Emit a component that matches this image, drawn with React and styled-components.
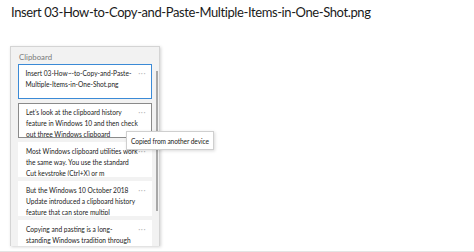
import React from 'react'
import styled, { createGlobalStyle } from 'styled-components'

const Global = createGlobalStyle`
  html, body {
    margin: 0;
    padding: 0;
    background: #fff;
    overflow: hidden;
  }
`

const Page = styled.div`
  width: 474px;
  height: 252px;
  position: relative;
  overflow: hidden;
  display: flex;
  flex-direction: column;
`

const Title = styled.div`
  font-family: Lato, "Open Sans", sans-serif;
  font-size: 13px;
  letter-spacing: -0.4px;
  line-height: 18px;
  color: #1a1a1a;
  padding: 3px 0 0 11px;
  height: 25px;
  box-sizing: border-box;
`

const Stage = styled.div`
  flex: 1;
  padding: 21px 0 0 10px;
  border-bottom: 1px solid #e4e4e4;
`

const Panel = styled.div`
  width: 150px;
  height: 200px;
  box-sizing: border-box;
  background: #f2f2f2;
  border: 1px solid #d4d4d4;
  border-bottom: none;
  box-shadow: 1px 1px 3px rgba(0, 0, 0, 0.18);
  overflow: hidden;
  font-family: Lato, "Open Sans", sans-serif;
`

const Header = styled.div`
  font-size: 7.8px;
  color: #7a7a7a;
  padding: 5px 0 0 8px;
  height: 17px;
  box-sizing: border-box;
`

const Body = styled.div`
  display: flex;
  padding-left: 7px;
  gap: 4px;
`

const List = styled.div`
  width: 134px;
  flex-shrink: 0;
  display: flex;
  flex-direction: column;
  gap: 4px;
`

const Item = styled.div`
  position: relative;
  height: 35px;
  box-sizing: border-box;
  background: #fff;
  border: ${p => p.$selected ? '1.5px solid #3b8ad6' : p.$hover ? '1px solid #8a8a8a' : '1px solid #fff'};
  padding: ${p => p.$selected ? '2.5px 0 0 6.5px' : '3px 0 0 7px'};
  font-size: 6.6px;
  line-height: 11px;
  color: #222;
  overflow: hidden;
`

const Line = styled.div`
  white-space: nowrap;
`

const More = styled.span`
  position: absolute;
  right: 5px;
  top: 4px;
  font-size: 8px;
  line-height: 8px;
  color: #b4b4b4;
  letter-spacing: 0.5px;
`

const Scroll = styled.div`
  width: 1.5px;
  flex-shrink: 0;
  height: 140px;
  margin-top: 7px;
  background: #a8a8a8;
`

const Tooltip = styled.div`
  position: absolute;
  left: 126px;
  top: 131px;
  padding: 0 4px;
  height: 19px;
  line-height: 18px;
  box-sizing: border-box;
  background: #fff;
  border: 1px solid #cfcfcf;
  box-shadow: 1px 1px 3px rgba(0, 0, 0, 0.15);
  font-family: Lato, "Open Sans", sans-serif;
  font-size: 6.6px;
  letter-spacing: -0.1px;
  color: #222;
  white-space: nowrap;
`

const items = [
  { lines: ['Insert 03-How~-to-Copy-and-Paste-', 'Multiple-Items-in-One-Shot.png'], selected: true },
  { lines: ['Let\u2019s look at the clipboard history', 'feature in Windows 10 and then check', 'out three Windows clipboard'], hover: true },
  { lines: ['Most Windows clipboard utilities work', 'the same way. You use the standard', 'Cut keystroke (Ctrl+X) or m'] },
  { lines: ['But the Windows 10 October 2018', 'Update introduced a clipboard history', 'feature that can store multipl'] },
  { lines: ['Copying and pasting is a long-', 'standing Windows tradition through'] },
]

const App = () => (
  <Page>
    <Global />
    <Title>Insert 03-How-to-Copy-and-Paste-Multiple-Items-in-One-Shot.png</Title>
    <Stage>
      <Panel>
        <Header>Clipboard</Header>
        <Body>
          <List>
            {items.map((it, i) => (
              <Item key={i} $selected={it.selected} $hover={it.hover}>
                {it.lines.map((l, j) => <Line key={j}>{l}</Line>)}
                <More>···</More>
              </Item>
            ))}
          </List>
          <Scroll />
        </Body>
      </Panel>
    </Stage>
    <Tooltip>Copied from another device</Tooltip>
  </Page>
)

export default App
